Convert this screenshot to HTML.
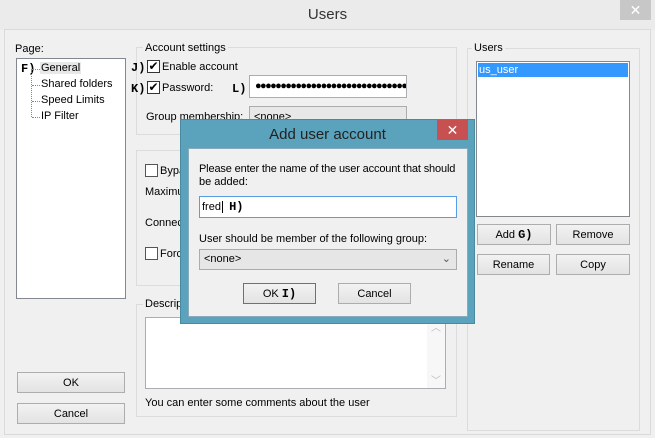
<!DOCTYPE html>
<html><head><style>
*{box-sizing:border-box;margin:0;padding:0}
body{width:655px;height:438px;background:#f0f0f0;font-family:"Liberation Sans",sans-serif;font-size:11px;color:#000;position:relative;overflow:hidden}
.a{position:absolute}
.gb{position:absolute;border:1px solid #dcdcdc}
.gl{position:absolute;background:#f0f0f0;padding:0 2px;white-space:nowrap}
.btn{position:absolute;border:1px solid #adadad;background:linear-gradient(#f2f2f2,#e3e3e3);text-align:center;line-height:20px}
.cb{position:absolute;width:13px;height:13px;border:1px solid #333;background:#fff}
.b{font-family:"Liberation Mono",monospace;font-weight:bold;font-size:12px}
.t{white-space:nowrap}
</style></head><body>
<div class="a" style="left:0;top:0;width:655px;height:30px;background:#ebebeb"></div>
<div class="a t" style="left:0;width:655px;top:6px;text-align:center;font-size:15px;color:#333">Users</div>
<div class="a" style="left:620px;top:0;width:31px;height:20px;background:#c7c7c7;color:#fff;text-align:center;font-size:14px;line-height:20px">✕</div>
<div class="a" style="left:4px;top:29px;width:647px;height:406px;border:1px solid #dadada"></div>

<div class="a t" style="left:15px;top:43px">Page:</div>
<div class="a" style="left:16px;top:58px;width:110px;height:241px;border:1px solid #828790;background:#fff"></div>
<div class="a b" style="left:21px;top:62px">F)</div>
<div class="a" style="left:31px;top:69px;width:1px;height:48px;border-left:1px dotted #888"></div>
<div class="a" style="left:32px;top:69px;width:8px;border-top:1px dotted #888"></div>
<div class="a" style="left:32px;top:85px;width:8px;border-top:1px dotted #888"></div>
<div class="a" style="left:32px;top:101px;width:8px;border-top:1px dotted #888"></div>
<div class="a" style="left:32px;top:117px;width:8px;border-top:1px dotted #888"></div>
<div class="a t" style="left:40px;top:62px;background:#e8e8e8;padding:0 1px">General</div>
<div class="a t" style="left:41px;top:78px">Shared folders</div>
<div class="a t" style="left:41px;top:94px">Speed Limits</div>
<div class="a t" style="left:41px;top:110px">IP Filter</div>
<div class="btn" style="left:17px;top:372px;width:108px;height:21px">OK</div>
<div class="btn" style="left:17px;top:403px;width:108px;height:21px">Cancel</div>

<div class="gb" style="left:136px;top:47px;width:321px;height:88px"></div>
<div class="gl" style="left:143px;top:42px">Account settings</div>
<div class="a b" style="left:131px;top:61px">J)</div>
<div class="cb" style="left:147px;top:60px;font-size:12px;line-height:11px;text-align:center">✔</div>
<div class="a t" style="left:162px;top:61px">Enable account</div>
<div class="a b" style="left:131px;top:82px">K)</div>
<div class="cb" style="left:147px;top:81px;font-size:12px;line-height:11px;text-align:center">✔</div>
<div class="a t" style="left:162px;top:82px">Password:</div>
<div class="a b" style="left:232px;top:82px">L)</div>
<div class="a" style="left:249px;top:75px;width:158px;height:23px;border:1px solid #abadb3;background:#fff;overflow:hidden;padding-left:5px;line-height:20px;font-size:11px;letter-spacing:-1.6px;white-space:nowrap">●●●●●●●●●●●●●●●●●●●●●●●●●●●●●●</div>
<div class="a t" style="left:146px;top:111px">Group membership:</div>
<div class="a" style="left:249px;top:106px;width:158px;height:22px;border:1px solid #acacac;background:#e8e8e8;padding-left:4px;line-height:20px">&lt;none&gt;</div>

<div class="gb" style="left:136px;top:150px;width:321px;height:136px"></div>
<div class="cb" style="left:145px;top:164px;border-color:#555"></div>
<div class="a t" style="left:160px;top:165px">Bypass</div>
<div class="a t" style="left:145px;top:186px">Maximum</div>
<div class="a t" style="left:145px;top:217px">Connections</div>
<div class="cb" style="left:145px;top:247px;border-color:#555"></div>
<div class="a t" style="left:160px;top:248px">Force</div>

<div class="gb" style="left:136px;top:304px;width:321px;height:113px"></div>
<div class="gl" style="left:143px;top:298px">Description</div>
<div class="a" style="left:145px;top:317px;width:301px;height:72px;border:1px solid #abadb3;background:#fff"></div>
<div class="a" style="left:427px;top:318px;width:18px;height:70px;background:#f7f7f7;color:#bbb;font-size:10px;text-align:center"><div style="margin-top:1px">︿</div><div style="margin-top:38px">﹀</div></div>
<div class="a t" style="left:145px;top:397px">You can enter some comments about the user</div>

<div class="gb" style="left:467px;top:48px;width:173px;height:383px"></div>
<div class="gl" style="left:472px;top:42px">Users</div>
<div class="a" style="left:476px;top:61px;width:154px;height:156px;border:1px solid #828790;background:#fff"></div>
<div class="a t" style="left:478px;top:63px;width:150px;height:14px;background:#3399ff;color:#fff;padding-left:1px;line-height:14px">us_user</div>
<div class="btn" style="left:477px;top:224px;width:74px;height:21px">Add <span class="b">G)</span></div>
<div class="btn" style="left:556px;top:224px;width:74px;height:21px">Remove</div>
<div class="btn" style="left:477px;top:254px;width:73px;height:21px">Rename</div>
<div class="btn" style="left:556px;top:254px;width:74px;height:21px">Copy</div>

<div class="a" style="left:180px;top:119px;width:295px;height:205px;background:#5ba3bc;border:1px solid #4a8aa1"></div>
<div class="a t" style="left:180px;width:295px;top:126px;text-align:center;font-size:15px;color:#222">Add user account</div>
<div class="a" style="left:437px;top:120px;width:31px;height:20px;background:#c75050;color:#fff;text-align:center;font-size:14px;line-height:20px">✕</div>
<div class="a" style="left:188px;top:148px;width:280px;height:169px;background:#f0f0f0;border:1px solid #8ab"></div>
<div class="a t" style="left:199px;top:163px;letter-spacing:-0.15px">Please enter the name of the user account that should</div>
<div class="a t" style="left:199px;top:176px">be added:</div>
<div class="a" style="left:199px;top:196px;width:258px;height:22px;border:1px solid #569de5;background:#fff;padding-left:2px;line-height:20px">fred<span style="border-left:1px solid #000;margin-left:1px"></span> &nbsp;<span class="b">H)</span></div>
<div class="a t" style="left:199px;top:233px">User should be member of the following group:</div>
<div class="a" style="left:199px;top:249px;width:258px;height:21px;border:1px solid #acacac;background:#e6e6e6;padding-left:4px;line-height:19px">&lt;none&gt;<span style="position:absolute;right:5px;color:#555">⌄</span></div>
<div class="btn" style="left:243px;top:283px;width:73px;height:21px;border-color:#3c7fb1">OK <span class="b">I)</span></div>
<div class="btn" style="left:338px;top:283px;width:73px;height:21px">Cancel</div>
</body></html>
